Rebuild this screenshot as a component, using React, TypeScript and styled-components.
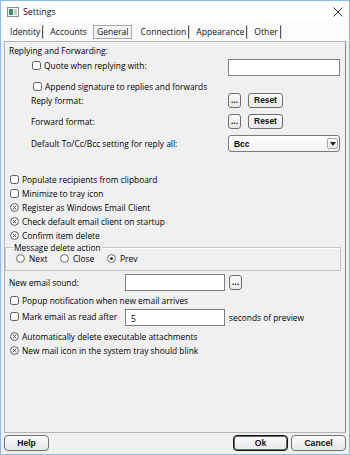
import React, {useState} from 'react';
import styled, {createGlobalStyle} from 'styled-components';

const GlobalStyle = createGlobalStyle`
  html, body {
    margin: 0;
    padding: 0;
    background: #ffffff;
  }
  body {
    font-family: "Open Sans", "Noto Sans", sans-serif;
    font-size: 8.4px;
    color: #000000;
  }
`;

const TABS = ['Identity', 'Accounts', 'General', 'Connection', 'Appearance', 'Other'];

const Check: React.FC<{checked?: boolean}> = ({checked}) =>
  checked ? (
    <svg width="9" height="9" viewBox="0 0 9 9">
      <circle cx="4.5" cy="4.5" r="3.9" fill="#fff" stroke="#4a4a4a" strokeWidth="0.9" />
      <path d="M2.9 2.9 L6.1 6.1 M6.1 2.9 L2.9 6.1" stroke="#3a3a3a" strokeWidth="0.9" />
    </svg>
  ) : (
    <svg width="9" height="9" viewBox="0 0 9 9">
      <rect x="0.5" y="0.5" width="8" height="8" rx="2" fill="#fff" stroke="#4a4a4a" strokeWidth="0.9" />
    </svg>
  );

const Radio: React.FC<{selected?: boolean}> = ({selected}) => (
  <svg width="9" height="9" viewBox="0 0 9 9">
    <circle cx="4.5" cy="4.5" r="3.9" fill="#fff" stroke="#555" strokeWidth="0.9" />
    {selected && <circle cx="4.5" cy="4.5" r="1.6" fill="#333" />}
  </svg>
);

const CheckItem: React.FC<{label: string; checked?: boolean}> = ({label, checked}) => (
  <CheckLabel>
    <Check checked={checked} />
    <span>{label}</span>
  </CheckLabel>
);

const App: React.FC = () => {
  const [tab] = useState('General');
  const [action] = useState('Prev');

  return (
    <>
      <GlobalStyle />
      <Window>
        <TitleBar>
          <svg width="12" height="10" viewBox="0 0 12 10">
            <rect x="0.5" y="0.5" width="11" height="9" fill="#fff" stroke="#8c8c8c" />
            <rect x="2" y="2" width="4" height="6" fill="#3f8f74" />
            <rect x="7" y="2" width="3" height="6" fill="#c9c9c9" />
          </svg>
          <TitleText>Settings</TitleText>
          <CloseIcon width="10" height="10" viewBox="0 0 10 10">
            <path d="M0.5 0.5 L9.5 9.5 M9.5 0.5 L0.5 9.5" stroke="#222" strokeWidth="0.9" />
          </CloseIcon>
        </TitleBar>

        <TabStrip>
          {TABS.map((t, i) => (
            <Tab
              key={t}
              $selected={t === tab}
              $sep={t !== tab && TABS[i + 1] !== tab}
            >
              {t}
            </Tab>
          ))}
        </TabStrip>

        <Panel>
          <Row $h={14} $mt={1}>
            <span>Replying and Forwarding:</span>
          </Row>
          <FormRow $h={19} $mt={1} $col={219}>
            <Indent $pad={22} $top={-4}>
              <CheckItem label="Quote when replying with:" />
            </Indent>
            <TextInput $w={112} />
          </FormRow>
          <Row $h={14} $mt={2} $indent={23}>
            <CheckItem label="Append signature to replies and forwards" />
          </Row>
          <FormRow $h={15} $mt={0} $col={219}>
            <Indent $pad={22}>Reply format:</Indent>
            <Buttons>
              <SmallButton $w={13}>...</SmallButton>
              <SmallButton $w={35}>Reset</SmallButton>
            </Buttons>
          </FormRow>
          <FormRow $h={15} $mt={6} $col={219}>
            <Indent $pad={22}>Forward format:</Indent>
            <Buttons>
              <SmallButton $w={13}>...</SmallButton>
              <SmallButton $w={35}>Reset</SmallButton>
            </Buttons>
          </FormRow>
          <FormRow $h={17} $mt={6} $col={219}>
            <Indent $pad={22}>Default To/Cc/Bcc setting for reply all:</Indent>
            <Select>
              <span>Bcc</span>
              <SelectArrow>
                <svg width="6" height="4" viewBox="0 0 6 4">
                  <path d="M0 0 H6 L3 4 Z" fill="#222" />
                </svg>
              </SelectArrow>
            </Select>
          </FormRow>

          <CheckList>
            <CheckItem label="Populate recipients from clipboard" />
            <CheckItem label="Minimize to tray icon" />
            <CheckItem label="Register as Windows Email Client" checked />
            <CheckItem label="Check default email client on startup" checked />
            <CheckItem label="Confirm item delete" checked />
          </CheckList>

          <GroupBox>
            <Legend>Message delete action</Legend>
            <RadioRow>
              {[
                ['Next', 44],
                ['Close', 47],
                ['Prev', 40],
              ].map(([name, w]) => (
                <RadioItem key={name} $w={w as number}>
                  <Radio selected={name === action} />
                  <span>{name}</span>
                </RadioItem>
              ))}
            </RadioRow>
          </GroupBox>

          <FormRow $h={17} $mt={3} $col={116}>
            <span>New email sound:</span>
            <Buttons>
              <TextInput $w={100} />
              <SmallButton $w={13}>...</SmallButton>
            </Buttons>
          </FormRow>
          <Row $h={14} $mt={2}>
            <CheckItem label="Popup notification when new email arrives" />
          </Row>
          <FormRow $h={17} $mt={2} $col={116}>
            <Indent $pad={0} $top={-2}>
              <CheckItem label="Mark email as read after" />
            </Indent>
            <Buttons>
              <TextInput $w={100} defaultValue="5" />
              <span>seconds of preview</span>
            </Buttons>
          </FormRow>
          <CheckList $mt={3}>
            <CheckItem label="Automatically delete executable attachments" checked />
            <CheckItem label="New mail icon in the system tray should blink" checked />
          </CheckList>
        </Panel>

        <Footer>
          <DialogButton $w={45}>Help</DialogButton>
          <FooterRight>
            <DialogButton $w={55} $default>
              Ok
            </DialogButton>
            <DialogButton $w={55}>Cancel</DialogButton>
          </FooterRight>
        </Footer>
      </Window>
    </>
  );
};

const Window = styled.div`
  width: 350px;
  height: 455px;
  box-sizing: border-box;
  border: 1px solid #8fbce8;
  background: #f0f0f0;
  display: flex;
  flex-direction: column;
  overflow: hidden;
`;

const TitleBar = styled.div`
  height: 20px;
  background: #ffffff;
  display: flex;
  align-items: center;
  padding: 1px 6px 0 6px;
  flex-shrink: 0;
`;

const TitleText = styled.span`
  margin-left: 4px;
  font-size: 8.8px;
  color: #111;
`;

const CloseIcon = styled.svg`
  margin-left: auto;
`;

const TabStrip = styled.div`
  height: 19px;
  box-sizing: border-box;
  background: #fbfbfb;
  display: flex;
  align-items: flex-end;
  padding: 0 0 2px 5px;
  flex-shrink: 0;
`;

const Tab = styled.div<{$selected?: boolean; $sep?: boolean}>`
  height: 12px;
  line-height: 12px;
  padding: 0 2px 0 3px;
  margin-right: ${p => (p.$selected ? '5px' : '3px')};
  font-size: 8.6px;
  color: #111;
  border: 1px solid ${p => (p.$selected ? '#a8a8a8' : 'transparent')};
  border-right: 1px solid ${p => (p.$selected ? '#a8a8a8' : p.$sep ? '#5a5a5a' : 'transparent')};
  background: ${p => (p.$selected ? '#f4f4f4' : 'transparent')};
  box-shadow: ${p => (p.$sep ? '1px 0 0 #d8d8d8' : 'none')};
`;

const Panel = styled.div`
  height: 392px;
  margin: 0 3px;
  box-sizing: border-box;
  border: 1px solid #b4b4b4;
  border-right-color: #8c8c8c;
  background: #f0f0f0;
  padding: 0 4px;
  display: flex;
  flex-direction: column;
  flex-shrink: 0;
`;

const Row = styled.div<{$h: number; $mt: number; $indent?: number}>`
  height: ${p => p.$h}px;
  margin-top: ${p => p.$mt}px;
  padding-left: ${p => p.$indent ?? 0}px;
  display: flex;
  align-items: center;
  flex-shrink: 0;
`;

const FormRow = styled.div<{$h: number; $mt: number; $col: number}>`
  height: ${p => p.$h}px;
  margin-top: ${p => p.$mt}px;
  display: grid;
  grid-template-columns: ${p => p.$col}px 1fr;
  align-items: center;
  flex-shrink: 0;
`;

const Indent = styled.div<{$pad: number; $top?: number}>`
  padding-left: ${p => p.$pad}px;
  margin-top: ${p => p.$top ?? 0}px;
  display: flex;
  align-items: center;
`;

const CheckLabel = styled.label`
  display: flex;
  align-items: center;
  gap: 3px;
  padding-left: 1px;
  height: 14px;
  white-space: nowrap;
`;

const CheckList = styled.div<{$mt?: number}>`
  margin-top: ${p => p.$mt ?? 20}px;
  display: flex;
  flex-direction: column;
  flex-shrink: 0;
`;

const TextInput = styled.input<{$w: number}>`
  width: ${p => p.$w}px;
  height: 17px;
  box-sizing: border-box;
  border: 1px solid #7f7f7f;
  background: #fff;
  font: inherit;
  padding: 2px 0 0 5px;
  margin: 0;
  outline: none;
`;

const Buttons = styled.div`
  display: flex;
  align-items: center;
  gap: 4px;
  & > button + button {
    margin-left: 3px;
  }
`;

const SmallButton = styled.button<{$w: number}>`
  width: ${p => p.$w}px;
  height: 15px;
  box-sizing: border-box;
  padding: 0;
  border: 1px solid #6f6f6f;
  border-radius: 3px;
  background: linear-gradient(#fbfbfb, #e9e9e9);
  font-family: "Liberation Sans", Arial, sans-serif;
  font-weight: bold;
  font-size: 8.4px;
  line-height: 13px;
  color: #111;
`;

const Select = styled.div`
  width: 112px;
  height: 17px;
  box-sizing: border-box;
  border: 1px solid #7a7a7a;
  border-radius: 3px;
  background: linear-gradient(#ffffff, #f2f2f2);
  display: flex;
  align-items: center;
  padding-left: 5px;
  font-family: "Liberation Sans", Arial, sans-serif;
  font-weight: bold;
  font-size: 8.4px;
`;

const SelectArrow = styled.div`
  margin-left: auto;
  margin-right: 1px;
  width: 11px;
  height: 11px;
  box-sizing: border-box;
  border: 1px solid #a8a8a8;
  border-radius: 2px;
  background: linear-gradient(#fdfdfd, #e9e9e9);
  display: flex;
  align-items: center;
  justify-content: center;
`;

const GroupBox = styled.fieldset`
  margin: 0 0 0 -4px;
  padding: 0 0 3px 10px;
  height: 29px;
  box-sizing: border-box;
  border: 1px solid #c4c4c4;
  box-shadow: inset 1px 1px 0 #fff;
  flex-shrink: 0;
`;

const Legend = styled.legend`
  padding: 0 1px;
  margin-left: -3px;
  font-size: 8.4px;
  line-height: 11px;
`;

const RadioRow = styled.div`
  display: flex;
  align-items: center;
  height: 12px;
  margin-top: -1px;
`;

const RadioItem = styled.label<{$w: number}>`
  width: ${p => p.$w}px;
  display: flex;
  align-items: center;
  gap: 4px;
`;

const Footer = styled.div`
  flex: 1;
  display: flex;
  align-items: flex-start;
  padding: 2px 3px 0 3px;
`;

const FooterRight = styled.div`
  margin-left: auto;
  display: flex;
  gap: 3px;
`;

const DialogButton = styled.button<{$w: number; $default?: boolean}>`
  width: ${p => p.$w}px;
  height: 16px;
  box-sizing: border-box;
  padding: 0;
  border: 1px solid ${p => (p.$default ? '#111' : '#707070')};
  box-shadow: ${p => (p.$default ? 'inset 0 0 0 1px #6a6a6a' : 'none')};
  border-radius: 4px;
  background: linear-gradient(#fbfbfb, #e8e8e8);
  font-family: "Liberation Sans", Arial, sans-serif;
  font-weight: bold;
  font-size: 8.6px;
  color: #111;
`;

export default App;
